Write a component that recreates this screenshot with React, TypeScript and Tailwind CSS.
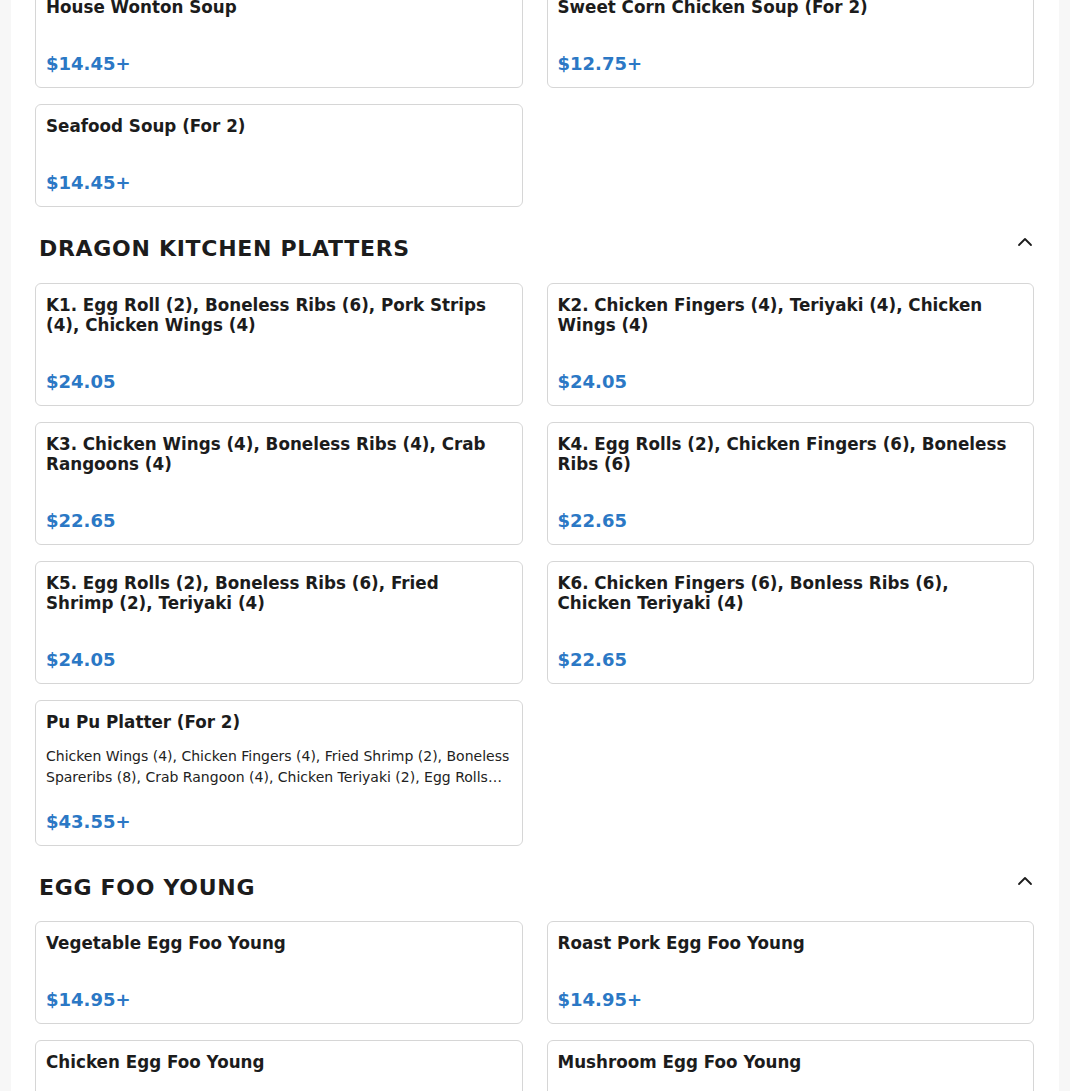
import React from "react";

type Item = { title: string; price: string; desc?: string };

function Card({ item }: { item: Item }) {
  return (
    <div className="flex flex-col rounded-[6px] border border-[#d6d6d6] bg-white px-[10px] pt-[11px] pb-[12px]">
      <div className="text-[16.75px] font-bold leading-[20px] text-[#1c1c1c]">{item.title}</div>
      {item.desc ? (
        <>
          <div className="mt-[14px] line-clamp-2 text-[14px] leading-[21px] text-[#222222]">{item.desc}</div>
          <div className="mt-[23px] text-[18px] font-bold leading-[22px] text-[#2b78c5]">{item.price}</div>
        </>
      ) : (
        <div className="mt-[36px] text-[18px] font-bold leading-[22px] text-[#2b78c5]">{item.price}</div>
      )}
    </div>
  );
}

function Grid({ items }: { items: Item[] }) {
  return (
    <div className="grid grid-cols-2 gap-x-[24px] gap-y-[16px]">
      {items.map((it, i) => (
        <Card key={i} item={it} />
      ))}
    </div>
  );
}

function Heading({ title, tight }: { title: string; tight?: boolean }) {
  return (
    <div className={tight ? "mt-[27px] mb-[18px] flex items-center justify-between pl-[4px]" : "mt-[27px] mb-[19px] flex items-center justify-between pl-[4px]"}>
      <h2 className="text-[22px] font-bold leading-[30px] tracking-[0.7px] text-[#1c1c1c]">{title}</h2>
      <svg width="24" height="24" viewBox="0 0 24 24" fill="none" stroke="#1c1c1c" strokeWidth="1.8" strokeLinecap="round" strokeLinejoin="round" className="-mt-[15px] mr-[-3px]">
        <path d="M6 15l6-6 6 6" />
      </svg>
    </div>
  );
}

const soups: Item[] = [
  { title: "House Wonton Soup", price: "$14.45+" },
  { title: "Sweet Corn Chicken Soup (For 2)", price: "$12.75+" },
  { title: "Seafood Soup (For 2)", price: "$14.45+" },
];

const platters: Item[] = [
  { title: "K1. Egg Roll (2), Boneless Ribs (6), Pork Strips (4), Chicken Wings (4)", price: "$24.05" },
  { title: "K2. Chicken Fingers (4), Teriyaki (4), Chicken Wings (4)", price: "$24.05" },
  { title: "K3. Chicken Wings (4), Boneless Ribs (4), Crab Rangoons (4)", price: "$22.65" },
  { title: "K4. Egg Rolls (2), Chicken Fingers (6), Boneless Ribs (6)", price: "$22.65" },
  { title: "K5. Egg Rolls (2), Boneless Ribs (6), Fried Shrimp (2), Teriyaki (4)", price: "$24.05" },
  { title: "K6. Chicken Fingers (6), Bonless Ribs (6), Chicken Teriyaki (4)", price: "$22.65" },
  {
    title: "Pu Pu Platter (For 2)",
    price: "$43.55+",
    desc: "Chicken Wings (4), Chicken Fingers (4), Fried Shrimp (2), Boneless Spareribs (8), Crab Rangoon (4), Chicken Teriyaki (2), Egg Rolls (2), Beef Teriyaki (2)",
  },
];

const eggFoo: Item[] = [
  { title: "Vegetable Egg Foo Young", price: "$14.95+" },
  { title: "Roast Pork Egg Foo Young", price: "$14.95+" },
  { title: "Chicken Egg Foo Young", price: "$14.95+" },
  { title: "Mushroom Egg Foo Young", price: "$14.95+" },
];

export default function App() {
  return (
    <div className="min-h-screen bg-[#f7f7f7] px-[11px]" style={{ fontFamily: '"DejaVu Sans", sans-serif' }}>
      <div className="h-[1091px] overflow-hidden bg-white pl-[24px] pr-[25px]">
        <div className="-mt-[15px]">
          <Grid items={soups} />
          <Heading title="DRAGON KITCHEN PLATTERS" />
          <Grid items={platters} />
          <Heading title="EGG FOO YOUNG" tight />
          <Grid items={eggFoo} />
        </div>
      </div>
    </div>
  );
}
